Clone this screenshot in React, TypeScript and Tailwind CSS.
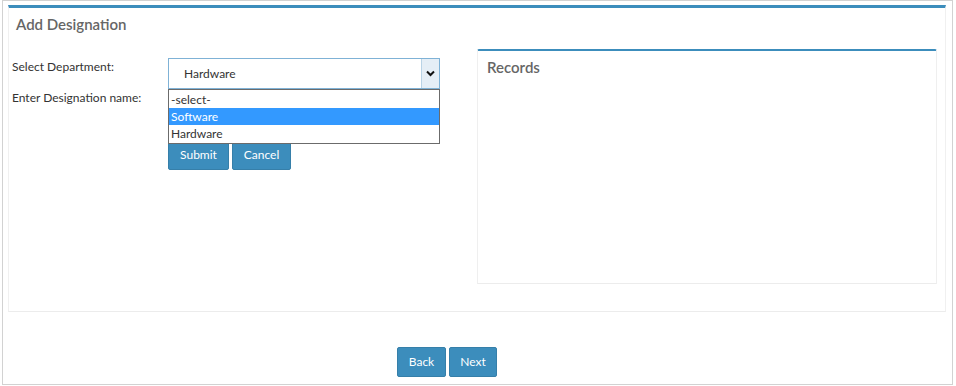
import { useState } from "react";

const options = ["-select-", "Software", "Hardware"];

export default function App() {
  const [selected] = useState("Hardware");
  const [hover] = useState("Software");

  return (
    <div className="h-[386px] w-[956px] bg-white font-['Lato',sans-serif] text-[#333]">
      <div className="ml-[2px] flex h-[385px] w-[951px] flex-col border border-[#d2d2d2] pl-[5px] pt-[4px]">
        <div className="h-[307px] w-[938px] border-t-[3px] border-[#3c8dbc] border-x border-b border-x-[#f0f0f0] border-b-[#ececec]">
          <h3 className="pl-[7px] pt-[6px] text-[15px] font-semibold leading-[20px] text-[#666]">Add Designation</h3>

          <div className="mt-[24px] flex">
            <DesignationForm selected={selected} hover={hover} />
            <RecordsBox />
          </div>
        </div>

        <div className="ml-[389px] mt-[35px] flex gap-[3px]">
          <BlueButton label="Back" width="w-[49px]" />
          <BlueButton label="Next" width="w-[48px]" />
        </div>
      </div>
    </div>
  );
}

function DesignationForm({ selected, hover }: { selected: string; hover: string }) {
  return (
    <div className="relative w-[468px] pl-[2px]">
      <div className="flex items-start">
        <label className="w-[157px] pt-[2px] pl-[1px] text-[12px] leading-[14px]">Select Department:</label>
        <div className="relative">
          <div className="flex h-[31px] w-[272px] items-center border border-[#7fb2d6] bg-white">
            <span className="flex-1 pl-[15px] text-[12px] text-[#333]">{selected}</span>
            <span className="flex h-full w-[18px] items-center justify-center border-l border-[#b9d3e6] bg-[#e5eef6]">
              <svg width="9" height="7" viewBox="0 0 9 7">
                <path d="M1 1.5 L4.5 5 L8 1.5" fill="none" stroke="#111" strokeWidth="2" />
              </svg>
            </span>
          </div>
          <ul className="absolute left-0 top-[31px] z-10 w-[272px] border border-[#6b6b6b] bg-white py-[1px] text-[12px] leading-[17px]">
            {options.map((o) => (
              <li key={o} className={o === hover ? "bg-[#3399ff] pl-[2px] text-white" : "pl-[2px] text-[#333]"}>
                {o}
              </li>
            ))}
          </ul>
        </div>
      </div>

      <div className="mt-[2px] flex items-start">
        <label className="w-[157px] pl-[1px] text-[12px] leading-[14px]">Enter Designation name:</label>
        <input className="h-[31px] w-[272px] border border-[#ccc]" />
      </div>

      <div className="ml-[157px] mt-[18px] flex gap-[3px]">
        <BlueButton label="Submit" width="w-[61px]" />
        <BlueButton label="Cancel" width="w-[59px]" />
      </div>
    </div>
  );
}

function RecordsBox() {
  return (
    <div className="mt-[-9px] h-[235px] w-[460px] rounded-t-[2px] border-t-[2px] border-[#3c8dbc] border-x border-b border-x-[#efefef] border-b-[#ececec]">
      <h3 className="pl-[9px] pt-[6px] text-[15px] font-semibold leading-[20px] text-[#666]">Records</h3>
    </div>
  );
}

function BlueButton({ label, width }: { label: string; width: string }) {
  return (
    <button className={`${width} h-[30px] rounded-[2px] border border-[#367fa9] bg-[#3c8dbc] text-[12px] text-white`}>
      {label}
    </button>
  );
}
